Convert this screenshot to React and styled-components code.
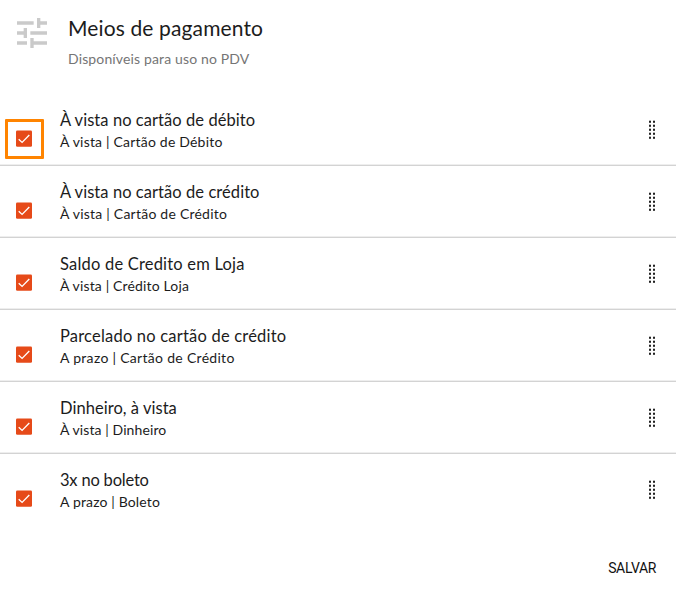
import React from "react";
import styled, { createGlobalStyle } from "styled-components";

const GlobalStyle = createGlobalStyle`
  * { box-sizing: border-box; }
  body { margin: 0; background: #fff; }
`;

const Panel = styled.main`
  width: 676px;
  height: 590px;
  display: flex;
  flex-direction: column;
  overflow: hidden;
  background: #fff;
  color: #1c1c1c;
  font-family: Lato, "Open Sans", sans-serif;
`;

const Header = styled.header`
  display: flex;
  gap: 16px;
  height: 94px;
  padding: 13px 12px 0;
`;

const TuneIcon = styled.svg`
  width: 40px;
  height: 40px;
  flex: none;
  fill: #cacaca;
`;

const Heading = styled.div`
  display: flex;
  flex-direction: column;
`;

const Title = styled.h1`
  margin: 0;
  font-size: 21px;
  font-weight: 400;
  line-height: 30px;
  letter-spacing: ${(p) => p.$track}px;
  white-space: nowrap;
`;

const Subtitle = styled.p`
  margin: 5px 0 0;
  font-size: 14px;
  line-height: 22px;
  letter-spacing: ${(p) => p.$track}px;
  color: #757575;
  white-space: nowrap;
`;

const List = styled.ul`
  margin: 0;
  padding: 0;
  list-style: none;
`;

const Row = styled.li`
  display: flex;
  height: 72px;
  border-bottom: 1px solid ${(p) => (p.$last ? "transparent" : "#d3d3d3")};
  box-shadow: ${(p) => (p.$last ? "none" : "inset 0 -1px #eeeeee")};
`;

const CheckFrame = styled.div`
  width: 39px;
  height: 40px;
  margin: 25px 16px 0 5px;
  padding: 8px;
  flex: none;
  border: 3px solid ${(p) => (p.$highlighted ? "#ff8400" : "transparent")};
  border-radius: 1px;
`;

const CheckBox = styled.svg`
  display: block;
  width: 16px;
  height: 17px;
`;

const Texts = styled.div`
  flex: 1;
  padding-top: 14px;
`;

const Name = styled.div`
  font-size: 16.5px;
  line-height: 24px;
  letter-spacing: ${(p) => p.$track}px;
  white-space: nowrap;
`;

const Detail = styled.div`
  font-size: 14px;
  line-height: 20px;
  letter-spacing: ${(p) => p.$track}px;
  white-space: nowrap;
`;

const DragHandle = styled.svg`
  width: 6px;
  height: 20px;
  margin: 26px 21px 0 0;
  flex: none;
`;

const Footer = styled.footer`
  display: flex;
  justify-content: flex-end;
  padding: 32px 20px 0 0;
`;

const SaveButton = styled.button`
  padding: 0;
  border: 0;
  background: none;
  color: #111;
  font: 400 14px/20px Roboto, sans-serif;
  letter-spacing: -0.35px;
`;

const methods = [
  { name: "À vista no cartão de débito", nameTrack: 0.06, detail: "À vista | Cartão de Débito", detailTrack: 0.2, highlighted: true },
  { name: "À vista no cartão de crédito", nameTrack: 0.06, detail: "À vista | Cartão de Crédito", detailTrack: 0.23 },
  { name: "Saldo de Credito em Loja", nameTrack: 0.2, detail: "À vista | Crédito Loja", detailTrack: 0.15 },
  { name: "Parcelado no cartão de crédito", nameTrack: 0.2, detail: "A prazo | Cartão de Crédito", detailTrack: 0.3 },
  { name: "Dinheiro, à vista", nameTrack: 0.04, detail: "À vista | Dinheiro", detailTrack: 0.1 },
  { name: "3x no boleto", nameTrack: -0.2, detail: "A prazo | Boleto", detailTrack: 0.15 },
];

function Checked() {
  return (
    <CheckBox viewBox="0 0 16 17">
      <rect y="0.4" width="16" height="16.4" rx="1.3" fill="#e64a19" />
      <path d="M2.7 9.2 6.1 12.4 13.3 5" fill="none" stroke="#fff" strokeWidth="1.35" />
    </CheckBox>
  );
}

function Dots() {
  return (
    <DragHandle viewBox="0 0 6 20">
      {[0, 4, 8, 12, 16].map((y) => (
        <g key={y} fill="#222">
          <rect x="0" y={y + 0.7} width="2" height="2.1" />
          <rect x="4" y={y + 0.7} width="2" height="2.1" />
        </g>
      ))}
    </DragHandle>
  );
}

export default function App() {
  return (
    <>
      <GlobalStyle />
      <Panel>
        <Header>
          <TuneIcon viewBox="0 0 24 24">
            <path d="M3 17v2h6v-2H3zM3 5v2h10V5H3zm10 16v-2h8v-2h-8v-2h-2v6h2zM7 9v2H3v2h4v2h2V9H7zm14 4v-2H11v2h10zm-6-4h2V7h4V5h-4V3h-2v6z" />
          </TuneIcon>
          <Heading>
            <Title $track={0.13}>Meios de pagamento</Title>
            <Subtitle $track={0.14}>Disponíveis para uso no PDV</Subtitle>
          </Heading>
        </Header>
        <List>
          {methods.map((m, i) => (
            <Row key={m.name} $last={i === methods.length - 1}>
              <CheckFrame $highlighted={m.highlighted}>
                <Checked />
              </CheckFrame>
              <Texts>
                <Name $track={m.nameTrack}>{m.name}</Name>
                <Detail $track={m.detailTrack}>{m.detail}</Detail>
              </Texts>
              <Dots />
            </Row>
          ))}
        </List>
        <Footer>
          <SaveButton>SALVAR</SaveButton>
        </Footer>
      </Panel>
    </>
  );
}
